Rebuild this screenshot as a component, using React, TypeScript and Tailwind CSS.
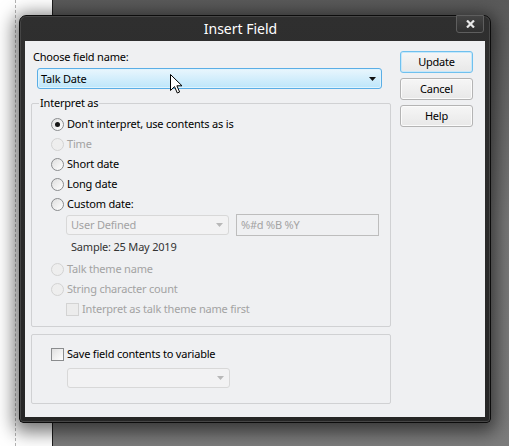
import React from 'react';

function Radio({ checked, disabled, label }: { checked?: boolean; disabled?: boolean; label: string }) {
  return (
    <div className="h-[20px] flex items-center ml-[19px]">
      <span
        className={`w-[13px] h-[13px] rounded-full border flex items-center justify-center shrink-0 ${
          disabled ? 'border-[#d3d3d3] bg-[#eeeeee]' : 'border-[#8a8c8e] bg-linear-to-br from-[#dedede] to-[#ffffff]'
        }`}
      >
        {checked && <span className="w-[5px] h-[5px] rounded-full bg-[#151515]" />}
      </span>
      <span className={`ml-[3px] ${disabled ? 'text-[#a3a3a3]' : 'text-black'}`}>{label}</span>
    </div>
  );
}

function Check({ disabled, label }: { disabled?: boolean; label: string }) {
  return (
    <>
      <span
        className={`w-[13px] h-[13px] border shrink-0 ${
          disabled ? 'border-[#d3d3d3] bg-[#ececec]' : 'border-[#8a8c8e] bg-linear-to-br from-[#e0e0e0] to-[#ffffff]'
        }`}
      />
      <span className={`ml-[3px] ${disabled ? 'text-[#a3a3a3]' : 'text-black'}`}>{label}</span>
    </>
  );
}

function Arrow({ color }: { color: string }) {
  return (
    <svg width="7" height="4" viewBox="0 0 7 4">
      <path d="M0 0H7L3.5 4Z" fill={color} />
    </svg>
  );
}

function DisabledCombo({ text }: { text?: string }) {
  return (
    <div className="w-[163px] h-[20px] rounded-[3px] border border-[#d8d8d8] bg-[#f2f2f3] flex items-center">
      <span className="flex-1 pl-[4px] text-[#a3a3a3]">{text}</span>
      <span className="w-[17px] h-full flex items-center justify-center">
        <Arrow color="#b8b8b8" />
      </span>
    </div>
  );
}

function Button({ label, primary }: { label: string; primary?: boolean }) {
  return (
    <button
      className={`w-[73px] h-[22px] rounded-[3px] border text-black bg-linear-to-b from-[#f6f6f6] to-[#e8e8e8] ${
        primary ? 'border-[#6fc0ee] shadow-[inset_0_0_0_1px_#c7e8fa]' : 'border-[#b4b4b4] shadow-[inset_0_0_0_1px_#fbfbfb]'
      }`}
    >
      {label}
    </button>
  );
}

export default function App() {
  return (
    <div className="relative w-[509px] h-[446px] overflow-hidden flex font-['Noto_Sans','DejaVu_Sans',sans-serif] text-[11px] leading-[16px] tracking-[-0.2px]">
      <div className="w-[52px] bg-white flex">
        <div className="ml-[15px] h-full border-l border-dashed border-[#b4b4b4]" />
      </div>
      <div className="w-[1px] bg-[#1c1c1c]" />
      <div className="flex-1 bg-linear-to-b from-[#5a5a5a] via-[#787878] to-[#7c7c7c]" />

      {/* dialog window */}
      <div className="absolute left-[19px] top-[15px] w-[472px] h-[408px] rounded-t-[7px] rounded-b-[4px] border border-[#0c0c0c] bg-linear-to-b from-[#2f2f2f] to-[#262626] shadow-[0_4px_18px_5px_rgba(0,0,0,0.55),inset_0_0_0_1px_#464646] flex flex-col px-[5px] pb-[5px]">
        <div className="h-[25px] flex items-start">
          <div className="flex-1 h-full flex items-center justify-center text-white text-[14px] leading-[18px] tracking-normal pt-[1px]">
            Insert Field
          </div>
          <div className="w-[28px] h-[18px] -mt-[1px] mr-[1px] rounded-b-[3px] border border-[#5e5e5e] bg-linear-to-b from-[#444444] to-[#303030] flex items-center justify-center">
            <svg width="9" height="8" viewBox="0 0 9 8">
              <path d="M1 0.5L8 7.5M8 0.5L1 7.5" stroke="#e8e8e8" strokeWidth="2.2" />
            </svg>
          </div>
        </div>

        <div className="flex-1 bg-[#eff0f2] flex pl-[6px]">
          {/* left column */}
          <div className="w-[360px] flex flex-col">
            <div className="mt-[8px] ml-[2px] text-black">Choose field name:</div>
            <div className="mt-[3px] ml-[6px] w-[345px] h-[21px] rounded-[3px] border border-[#5aaee6] bg-linear-to-b from-[#e9f6fd] to-[#bde6fa] shadow-[inset_0_0_0_1px_#dff3fd] flex items-center">
              <span className="flex-1 pl-[3px] text-black">Talk Date</span>
              <span className="w-[17px] flex items-center justify-center">
                <Arrow color="#111111" />
              </span>
            </div>

            <div className="mt-[14px] h-[224px] border border-[#d0d1d3] rounded-[2px] flex flex-col">
              <div className="-mt-[9px] ml-[7px] px-[1px] w-fit bg-[#eff0f2] text-black">Interpret as</div>
              <div className="mt-[3px] flex flex-col">
                <Radio checked label="Don't interpret, use contents as is" />
                <Radio disabled label="Time" />
                <Radio label="Short date" />
                <Radio label="Long date" />
                <Radio label="Custom date:" />
              </div>
              <div className="h-[22px] flex items-center ml-[34px]">
                <DisabledCombo text="User Defined" />
                <div className="ml-[7px] w-[143px] h-[22px] border border-[#bdbdbd] flex items-center pl-[4px] text-[#a3a3a3]">
                  %#d %B %Y
                </div>
              </div>
              <div className="mt-[3px] ml-[39px] text-[#333333]">Sample: 25 May 2019</div>
              <div className="mt-[4px] flex flex-col">
                <Radio disabled label="Talk theme name" />
                <Radio disabled label="String character count" />
              </div>
              <div className="h-[20px] flex items-center ml-[34px]">
                <Check disabled label="Interpret as talk theme name first" />
              </div>
            </div>

            <div className="mt-[7px] h-[70px] border border-[#d0d1d3] rounded-[2px] flex flex-col">
              <div className="mt-[9px] h-[20px] flex items-center ml-[19px]">
                <Check label="Save field contents to variable" />
              </div>
              <div className="mt-[4px] ml-[35px]">
                <DisabledCombo />
              </div>
            </div>
          </div>

          {/* right column */}
          <div className="ml-[9px] pt-[10px] flex flex-col gap-[5px]">
            <Button primary label="Update" />
            <Button label="Cancel" />
            <Button label="Help" />
          </div>
        </div>
      </div>

      {/* mouse pointer */}
      <svg className="absolute left-[170px] top-[74px]" width="13" height="20" viewBox="0 0 13 20">
        <path d="M0.5 0.5V16.5L4.5 12.6L7.3 19L9.6 18L6.9 11.8H12Z" fill="#ffffff" stroke="#000000" strokeWidth="1" strokeLinejoin="miter" />
      </svg>
    </div>
  );
}
